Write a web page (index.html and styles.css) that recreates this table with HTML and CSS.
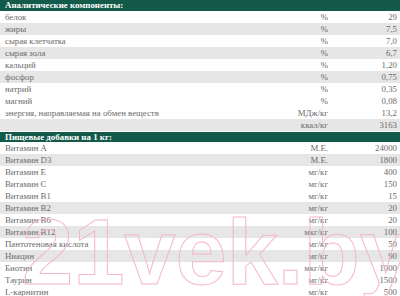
FILE: index.html
```html
<!DOCTYPE html>
<html lang="ru">
<head>
<meta charset="utf-8">
<link rel="stylesheet" href="styles.css">
</head>
<body>
<div class="page">
  <table class="spec">
    <colgroup><col><col class="cu"><col class="cv"></colgroup>
    <tr class="head"><th colspan="3">Аналитические компоненты:</th></tr>
    <tr><td>белок</td><td class="u">%</td><td class="v">29</td></tr>
    <tr class="g"><td>жиры</td><td class="u">%</td><td class="v">7,5</td></tr>
    <tr><td>сырая клетчатка</td><td class="u">%</td><td class="v">7,0</td></tr>
    <tr class="g"><td>сырая зола</td><td class="u">%</td><td class="v">6,7</td></tr>
    <tr><td>кальций</td><td class="u">%</td><td class="v">1,20</td></tr>
    <tr class="g"><td>фосфор</td><td class="u">%</td><td class="v">0,75</td></tr>
    <tr><td>натрий</td><td class="u">%</td><td class="v">0,35</td></tr>
    <tr><td>магний</td><td class="u">%</td><td class="v">0,08</td></tr>
    <tr><td>энергия, направляемая на обмен веществ</td><td class="u">МДж/кг</td><td class="v">13,2</td></tr>
    <tr class="g"><td></td><td class="u">ккал/кг</td><td class="v">3163</td></tr>
  </table>
  <table class="spec second">
    <colgroup><col><col class="cu"><col class="cv"></colgroup>
    <tr class="head"><th colspan="3">Пищевые добавки на 1 кг:</th></tr>
    <tr><td>Витамин A</td><td class="u">М.Е.</td><td class="v">24000</td></tr>
    <tr class="g"><td>Витамин D3</td><td class="u">М.Е.</td><td class="v">1800</td></tr>
    <tr><td>Витамин E</td><td class="u">мг/кг</td><td class="v">400</td></tr>
    <tr><td>Витамин C</td><td class="u">мг/кг</td><td class="v">150</td></tr>
    <tr><td>Витамин B1</td><td class="u">мг/кг</td><td class="v">15</td></tr>
    <tr class="g"><td>Витамин B2</td><td class="u">мг/кг</td><td class="v">20</td></tr>
    <tr><td>Витамин B6</td><td class="u">мг/кг</td><td class="v">20</td></tr>
    <tr class="g"><td>Витамин B12</td><td class="u">мкг/кг</td><td class="v">100</td></tr>
    <tr><td>Пантотеновая кислота</td><td class="u">мг/кг</td><td class="v">50</td></tr>
    <tr class="g"><td>Ниацин</td><td class="u">мг/кг</td><td class="v">90</td></tr>
    <tr><td>Биотин</td><td class="u">мкг/кг</td><td class="v">1000</td></tr>
    <tr><td>Таурин</td><td class="u">мг/кг</td><td class="v">1500</td></tr>
    <tr><td>L-карнитин</td><td class="u">мг/кг</td><td class="v">500</td></tr>
  </table>
  <div class="watermark" aria-hidden="true">21vek.by</div>
</div>
</body>
</html>
```
FILE: styles.css
```css
html, body {
  margin: 0;
  padding: 0;
  background: #fff;
}
.page {
  position: relative;
  width: 400px;
  height: 296px;
  overflow: hidden;
  font-family: "Liberation Serif", "Times New Roman", serif;
  font-size: 8.8px;
  color: #6b6b6b;
}
.spec {
  width: 400px;
  border-collapse: collapse;
  border-spacing: 0;
  table-layout: fixed;
}
.spec col.cu {
  width: 60px;
}
.spec col.cv {
  width: 72px;
}
.spec.second {
  margin-top: 1px;
}
.spec th {
  background: #145a4a;
  color: #fff;
  font-size: 8.9px;
  font-weight: bold;
  text-align: left;
  height: 11px;
  line-height: 11px;
  padding: 0 5px;
}
.spec.second th {
  height: 10px;
  line-height: 10px;
}
.spec td {
  height: 12px;
  line-height: 12px;
  padding: 0 0 0 5px;
  white-space: nowrap;
  overflow: hidden;
}
.spec tr.g td {
  background: #e6e6e6;
}
.spec td.u {
  text-align: right;
  padding: 0;
}
.spec td.v {
  text-align: right;
  padding: 0 3px 0 0;
}
.watermark {
  position: absolute;
  left: 22px;
  top: 202px;
  font-family: "Liberation Sans", Arial, sans-serif;
  font-weight: bold;
  font-size: 92px;
  line-height: 100px;
  color: transparent;
  -webkit-text-stroke: 1px #f5b8cb;
  pointer-events: none;
  white-space: nowrap;
}
```
